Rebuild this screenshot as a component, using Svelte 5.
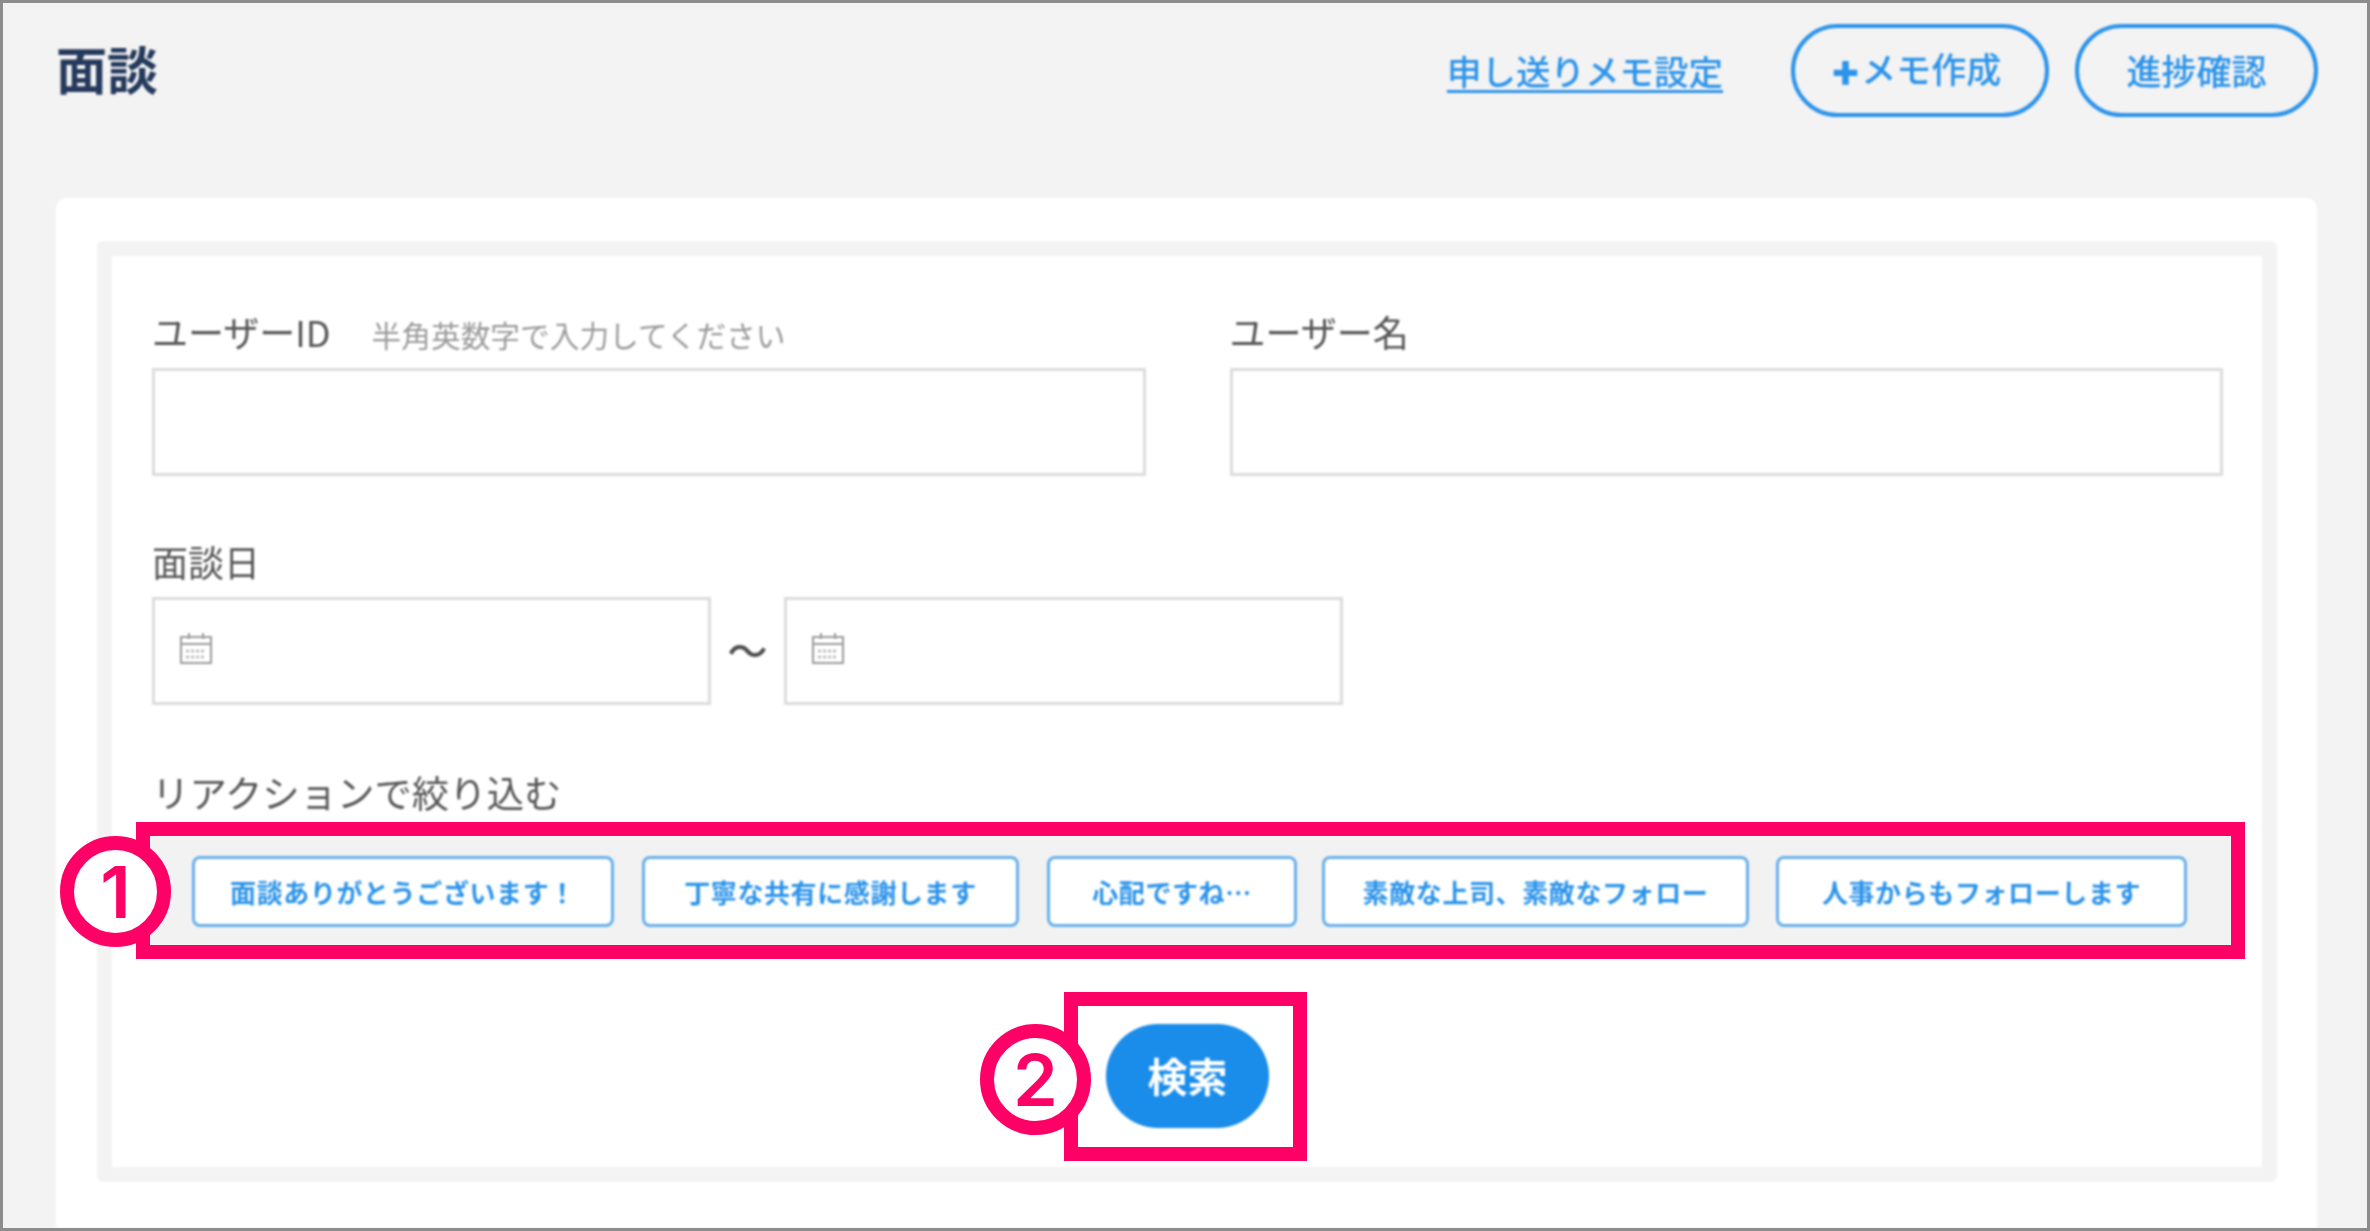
<script>
  const reactions = [
    { label: '面談ありがとうございます！', width: 422, gap: 0 },
    { label: '丁寧な共有に感謝します', width: 377, gap: 28 },
    { label: '心配ですね…', width: 250, gap: 28 },
    { label: '素敵な上司、素敵なフォロー', width: 427, gap: 25 },
    { label: '人事からもフォローします', width: 411, gap: 27 }
  ];
</script>

<div class="screen">
  <div class="ui">
    <header class="head">
      <h1>面談</h1>
      <a class="link" href="#memo">申し送りメモ設定</a>
      <button class="pill memo"><b>+</b>メモ作成</button>
      <button class="pill progress">進捗確認</button>
    </header>

    <main class="card">
      <section class="panel">
        <div class="pair">
          <div>
            <div class="label">ユーザーID<span class="hint">半角英数字で入力してください</span></div>
            <div class="input"></div>
          </div>
          <div>
            <div class="label">ユーザー名</div>
            <div class="input"></div>
          </div>
        </div>

        <div class="label date-label">面談日</div>
        <div class="dates">
          {#each [0, 1] as i}
            {#if i === 1}<span class="tilde">〜</span>{/if}
            <div class="input date">
              <svg width="32" height="31" viewBox="0 0 32 31" fill="none" stroke="#9a9a9a" stroke-width="2">
                <rect x="1" y="4" width="30" height="26" />
                <path d="M1 11h30M9 0v6M23 0v6" />
                <path d="M6 18h20M6 24h20" stroke-dasharray="3 2" stroke-width="2.5" stroke="#b5b5b5" />
              </svg>
            </div>
          {/each}
        </div>

        <div class="label reaction-label">リアクションで絞り込む</div>
        <div class="reactions">
          {#each reactions as r}
            <button class="chip" style="width:{r.width}px;margin-left:{r.gap}px">{r.label}</button>
          {/each}
        </div>

        <div class="actions">
          <button class="search">検索</button>
        </div>
      </section>
    </main>
  </div>

  <div class="frame frame-1"></div>
  <div class="frame frame-2"></div>
  <div class="badge badge-1">1</div>
  <div class="badge badge-2">2</div>
</div>

<style>
  :global(body) {
    margin: 0;
  }
  .screen {
    position: relative;
    width: 2370px;
    height: 1231px;
    box-sizing: border-box;
    border: 3px solid #8c8c8c;
    background: #f3f3f3;
    overflow: hidden;
    font-family: "Noto Sans CJK JP", "Noto Sans", sans-serif;
    color: #555;
  }
  .ui {
    height: 100%;
    display: flex;
    flex-direction: column;
    filter: blur(1.1px);
  }
  .head {
    height: 195px;
    box-sizing: border-box;
    padding: 21px 49px 0 53px;
    display: flex;
    align-items: flex-start;
    flex: none;
  }
  h1 {
    margin: 0 auto 0 0;
    height: 93px;
    line-height: 88px;
    font-size: 51px;
    font-weight: 700;
    color: #24395c;
  }
  .link {
    height: 93px;
    line-height: 92px;
    margin-right: 68px;
    font-size: 34.5px;
    font-weight: 500;
    color: #2b93ea;
    text-decoration: underline;
    text-underline-offset: 5px;
    text-decoration-thickness: 3px;
  }
  .pill {
    height: 93px;
    box-sizing: border-box;
    border: 4px solid #2b93ea;
    border-radius: 47px;
    background: transparent;
    color: #2b93ea;
    font: 500 35px/1 "Noto Sans CJK JP", sans-serif;
    padding: 0 0 3px;
  }
  .pill b {
    font: 800 46px/1 "Inter", sans-serif;
    vertical-align: -3px;
  }
  .memo {
    width: 258px;
    margin-right: 26px;
    padding-right: 9px;
  }
  .progress {
    width: 243px;
  }
  .card {
    flex: 1;
    margin: 0 50px 0 53px;
    padding: 43px 40px 0 41px;
    background: #fff;
    border-radius: 10px 10px 0 0;
  }
  .panel {
    height: 941px;
    box-sizing: border-box;
    border: 15px solid #f3f3f3;
    border-radius: 6px;
    padding: 50px 39px 0 40px;
  }
  .pair {
    display: grid;
    grid-template-columns: 1fr 1fr;
    gap: 84px;
  }
  .label {
    height: 50px;
    line-height: 50px;
    margin-bottom: 12px;
    font-size: 36px;
    color: #555;
  }
  .hint {
    margin-left: 41px;
    font-size: 29.7px;
    color: #9a9a9a;
  }
  .input {
    height: 108px;
    box-sizing: border-box;
    border: 3px solid #dcdcdc;
    background: #fff;
  }
  .date-label {
    margin: 60px 0 11px;
  }
  .dates {
    display: flex;
    align-items: center;
  }
  .date {
    width: 559px;
    display: flex;
    align-items: center;
    padding-left: 25px;
    padding-bottom: 5px;
  }
  .tilde {
    width: 73px;
    text-align: center;
    font-size: 40px;
    font-weight: 500;
    line-height: 1;
    padding-bottom: 4px;
    color: #4d4d4d;
  }
  .reaction-label {
    margin: 62px 0 19px;
    font-size: 37.4px;
  }
  .reactions {
    height: 110px;
    margin: 0 -10px 0 -3px;
    padding-left: 43px;
    background: #f2f2f2;
    display: flex;
    align-items: center;
  }
  .chip {
    height: 71px;
    box-sizing: border-box;
    padding: 0;
    flex: none;
    border: 3px solid #66b0ee;
    border-radius: 8px;
    background: #fff;
    color: #2b93ea;
    font: 700 26px "Noto Sans CJK JP", sans-serif;
    letter-spacing: 0.6px;
  }
  .actions {
    margin-top: 78px;
    display: flex;
    justify-content: center;
  }
  .search {
    width: 163px;
    height: 104px;
    border: 0;
    padding: 0 0 3px;
    border-radius: 52px;
    background: #1a8cea;
    color: #fff;
    font: 700 40px "Noto Sans CJK JP", sans-serif;
  }
  .frame {
    position: absolute;
    box-sizing: border-box;
    border: 14px solid #ff0066;
  }
  .frame-1 {
    left: 133px;
    top: 819px;
    width: 2109px;
    height: 137px;
  }
  .frame-2 {
    left: 1061px;
    top: 989px;
    width: 243px;
    height: 169px;
  }
  .badge {
    position: absolute;
    box-sizing: border-box;
    width: 111px;
    height: 111px;
    border: 14px solid #ff0066;
    border-radius: 50%;
    background: #fff;
    color: #ff0066;
    display: flex;
    align-items: center;
    justify-content: center;
    font: 600 72px "Inter", sans-serif;
  }
  .badge-1 {
    left: 57px;
    top: 833px;
  }
  .badge-2 {
    left: 977px;
    top: 1021px;
  }
</style>
